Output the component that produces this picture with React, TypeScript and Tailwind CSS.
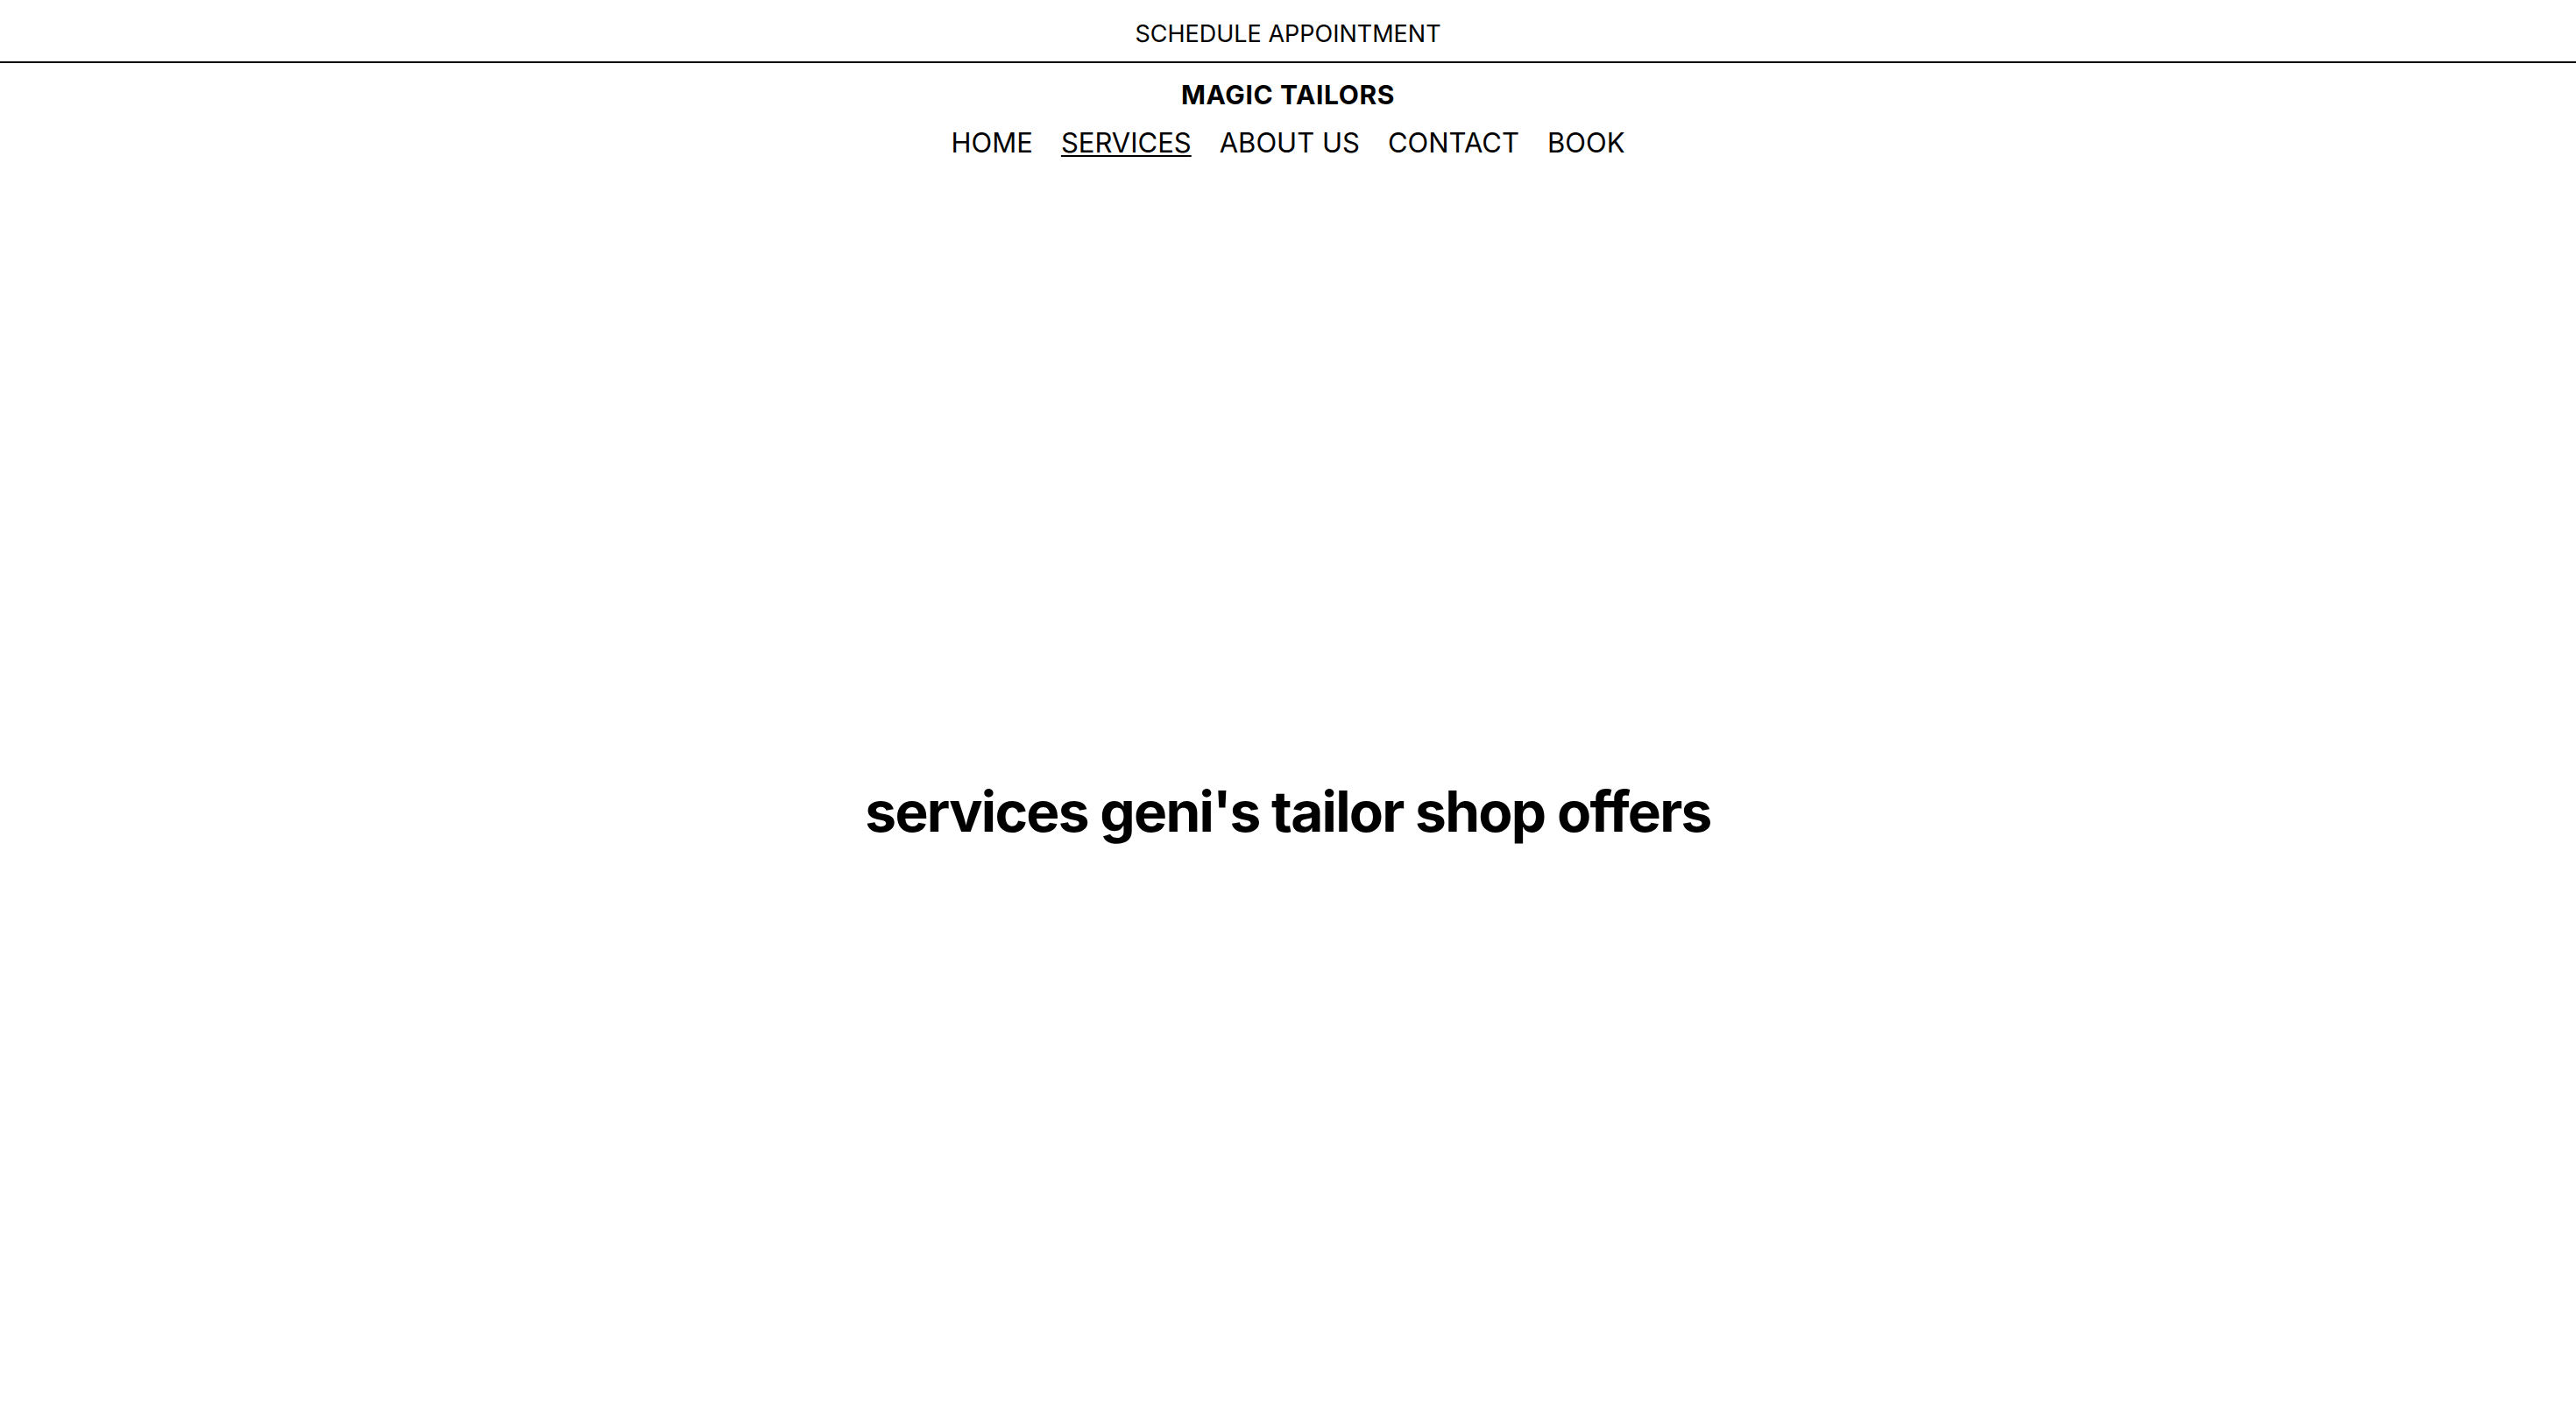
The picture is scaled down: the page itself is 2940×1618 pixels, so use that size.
import React from 'react'

const links = ['HOME', 'SERVICES', 'ABOUT US', 'CONTACT', 'BOOK']

const App = () => {
  return (
    <div className="min-h-screen flex flex-col bg-white text-black font-['Inter',sans-serif]">
      <div className="h-[72px] pt-[8px] flex items-center justify-center border-b-2 border-black">
        <span className="text-[27px] leading-normal">SCHEDULE APPOINTMENT</span>
      </div>
      <header className="flex flex-col items-center pt-[14px] pb-[48px]">
        <h1 className="text-[30px] leading-normal font-bold tracking-[0.02em]">MAGIC TAILORS</h1>
        <nav className="mt-[9px] flex items-center gap-[32px] text-[31px] leading-normal">
          {links.map((l) => (
            <a
              key={l}
              href="#"
              className={l === 'SERVICES' ? 'underline decoration-2 underline-offset-[3px]' : ''}
            >
              {l}
            </a>
          ))}
        </nav>
      </header>
      <main className="flex-1 flex items-center justify-center">
        <h2 className="text-[64px] leading-normal font-bold tracking-[-0.027em]">
          services geni's tailor shop offers
        </h2>
      </main>
    </div>
  )
}

export default App
